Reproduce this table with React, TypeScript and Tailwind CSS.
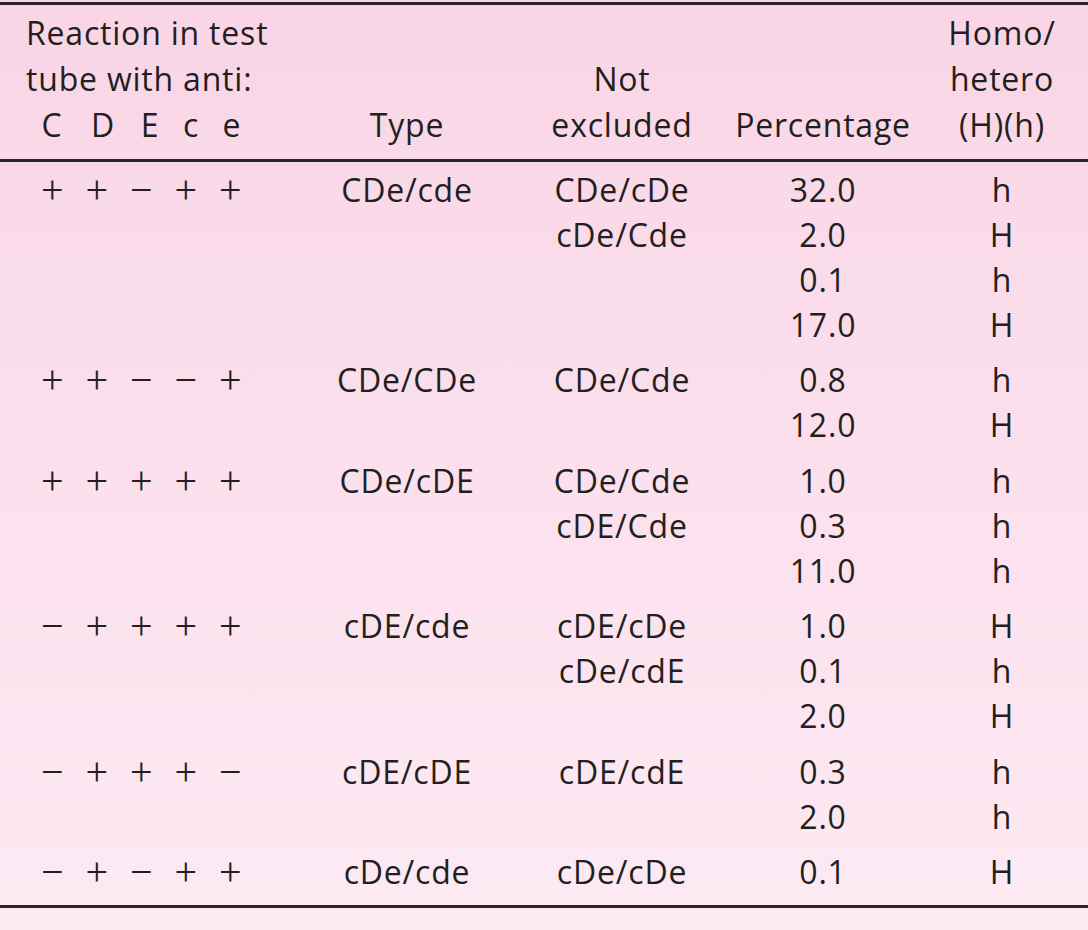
const cols = "grid grid-cols-[300px_214px_216px_186px_172px]"

type Row = { not: string; pct: string; hh: string }

const groups: { signs: string[]; type: string; rows: Row[] }[] = [
  {
    signs: ["+", "+", "−", "+", "+"],
    type: "CDe/cde",
    rows: [
      { not: "CDe/cDe", pct: "32.0", hh: "h" },
      { not: "cDe/Cde", pct: "2.0", hh: "H" },
      { not: "", pct: "0.1", hh: "h" },
      { not: "", pct: "17.0", hh: "H" },
    ],
  },
  {
    signs: ["+", "+", "−", "−", "+"],
    type: "CDe/CDe",
    rows: [
      { not: "CDe/Cde", pct: "0.8", hh: "h" },
      { not: "", pct: "12.0", hh: "H" },
    ],
  },
  {
    signs: ["+", "+", "+", "+", "+"],
    type: "CDe/cDE",
    rows: [
      { not: "CDe/Cde", pct: "1.0", hh: "h" },
      { not: "cDE/Cde", pct: "0.3", hh: "h" },
      { not: "", pct: "11.0", hh: "h" },
    ],
  },
  {
    signs: ["−", "+", "+", "+", "+"],
    type: "cDE/cde",
    rows: [
      { not: "cDE/cDe", pct: "1.0", hh: "H" },
      { not: "cDe/cdE", pct: "0.1", hh: "h" },
      { not: "", pct: "2.0", hh: "H" },
    ],
  },
  {
    signs: ["−", "+", "+", "+", "−"],
    type: "cDE/cDE",
    rows: [
      { not: "cDE/cdE", pct: "0.3", hh: "h" },
      { not: "", pct: "2.0", hh: "h" },
    ],
  },
  {
    signs: ["−", "+", "−", "+", "+"],
    type: "cDe/cde",
    rows: [{ not: "cDe/cDe", pct: "0.1", hh: "H" }],
  },
]

export default function App() {
  return (
    <div className="min-h-[930px] w-[1088px] bg-gradient-to-b from-[#f9d5e6] to-[#fdeaf3] pt-[2px] font-['Open_Sans',sans-serif] text-[32px] tracking-[0.8px] text-[#231f20]">
      <div className="border-y-[3px] border-[#2a2526]">
        {/* header */}
        <div className={`${cols} items-end border-b-[3px] border-[#2a2526] pt-[5px] pb-[11px] leading-[46px]`}>
          <div className="pl-[26px]">
            <div>Reaction in test</div>
            <div>tube with anti:</div>
            <div className="ml-[4px] grid grid-cols-[44px_58px_36px_46px_36px] text-center">
              <span>C</span>
              <span>D</span>
              <span>E</span>
              <span>c</span>
              <span>e</span>
            </div>
          </div>
          <div className="text-center">Type</div>
          <div className="text-center">
            <div>Not</div>
            <div>excluded</div>
          </div>
          <div className="text-center">Percentage</div>
          <div className="text-center">
            <div>Homo/</div>
            <div>hetero</div>
            <div>(H)(h)</div>
          </div>
        </div>

        {/* body */}
        <div className="pt-[5px] pb-[11px] leading-[45px]">
          {groups.map((g, gi) => (
            <div key={gi} className={`${cols} ${gi > 0 ? "mt-[10.4px]" : ""}`}>
              {g.rows.map((r, ri) => (
                <div key={ri} className="contents">
                  <div className="pl-[30px]">
                    {ri === 0 && (
                      <div className="grid grid-cols-[repeat(5,44.5px)] text-center font-['Liberation_Serif',serif] text-[40px] tracking-normal">
                        {g.signs.map((s, si) => (
                          <span key={si}>{s}</span>
                        ))}
                      </div>
                    )}
                  </div>
                  <div className="text-center">{ri === 0 ? g.type : ""}</div>
                  <div className="text-center">{r.not}</div>
                  <div className="text-center">{r.pct}</div>
                  <div className="text-center">{r.hh}</div>
                </div>
              ))}
            </div>
          ))}
        </div>
      </div>
    </div>
  )
}
